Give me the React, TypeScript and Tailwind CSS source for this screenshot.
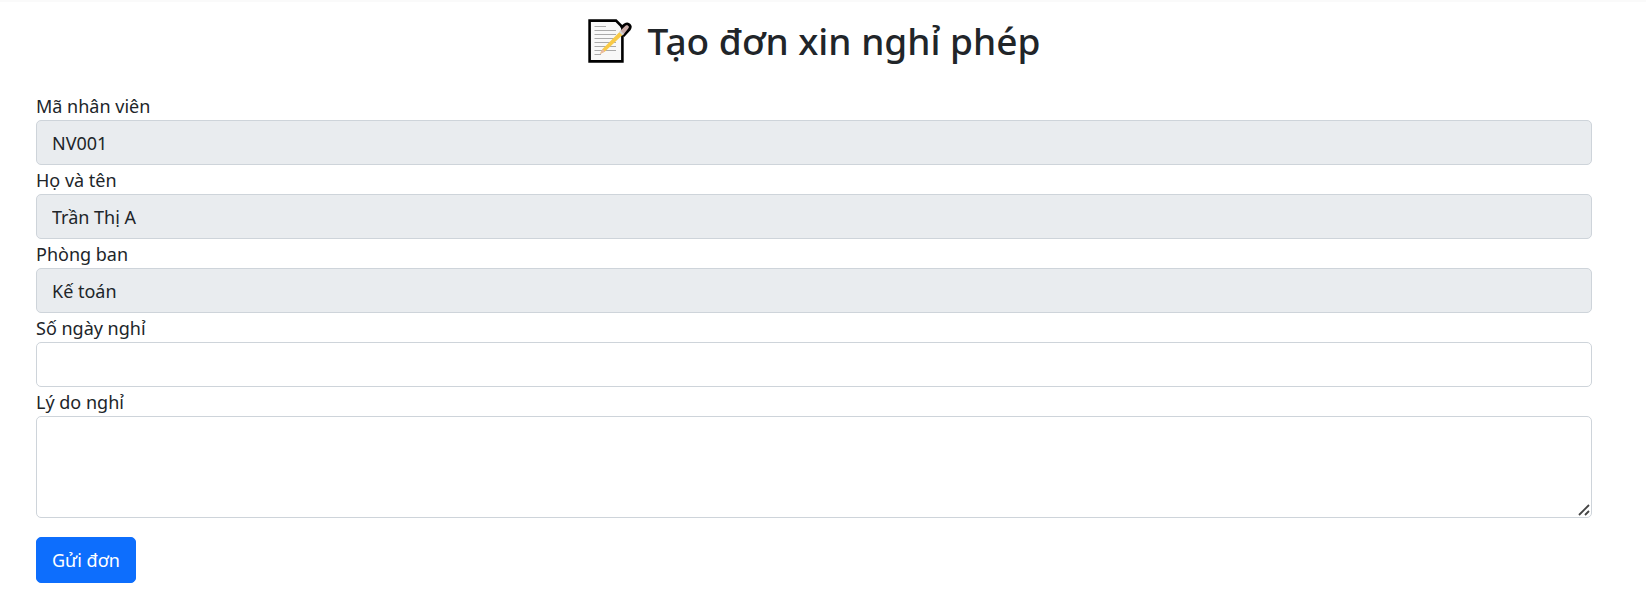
import type { ReactNode } from "react";

const control =
  "block w-full rounded-[5px] border border-[#ced4da] px-[15px] text-lg text-[#212529] outline-none focus:border-[#86b7fe]";

function MemoIcon() {
  return (
    <svg viewBox="0 0 44 44" className="size-11 shrink-0" aria-hidden="true">
      <path d="M1.6 1.6H28L34.4 8V42.4H1.6Z" fill="#f8f8f8" stroke="#000" strokeWidth="2.6" />
      <path
        d="M6.5 7.5H18M6.5 11.5H28M6.5 15.5H28M6.5 19.5H28M6.5 23.5H28M6.5 27.5H28M6.5 31.5H28M6.5 35.5H13"
        stroke="#aaa"
        strokeWidth="1.1"
      />
      <path d="M33 9L37 5.8C40.5 3.6 43.5 7 41.2 10.2L35 17" fill="none" stroke="#000" strokeWidth="3.2" />
      <path d="M12 35L14.5 30L32 12.5L35 15.5L17 32.5Z" fill="#f8ca48" />
      <path d="M12 35L14.5 30L17 32.5Z" fill="#e8b9a8" />
      <path d="M32 12L37.5 6.8C39.6 5.4 41.5 7.6 40.2 9.6L35.5 15.5Z" fill="#c9aaa6" />
      <path d="M31 13L32.5 11.5L36 15L34.5 16.5Z" fill="#d4d4d4" />
    </svg>
  );
}

function Field({ id, label, children }: { id: string; label: string; children: ReactNode }) {
  return (
    <div>
      <label htmlFor={id} className="block h-[29px] text-lg leading-[31px]">
        {label}
      </label>
      {children}
    </div>
  );
}

const employee = [
  { id: "code", label: "Mã nhân viên", value: "NV001" },
  { id: "name", label: "Họ và tên", value: "Trần Thị A" },
  { id: "department", label: "Phòng ban", value: "Kế toán" },
];

export default function App() {
  return (
    <main className="min-h-screen border-t-2 border-[#fafafa] bg-white pt-[11px] pr-[54px] pb-7 pl-9 font-['Noto_Sans',sans-serif] text-[#212529]">
      <h1 className="mb-[22px] flex h-14 items-center justify-center gap-4 text-[37px] leading-[56px] font-medium">
        <MemoIcon />
        Tạo đơn xin nghỉ phép
      </h1>
      <form onSubmit={(e) => e.preventDefault()}>
        {employee.map((f) => (
          <Field key={f.id} id={f.id} label={f.label}>
            <input id={f.id} type="text" readOnly value={f.value} className={`${control} h-[45px] bg-[#e9ecef]`} />
          </Field>
        ))}
        <Field id="days" label="Số ngày nghỉ">
          <input id="days" type="text" inputMode="numeric" className={`${control} h-[45px] bg-white`} />
        </Field>
        <Field id="reason" label="Lý do nghỉ">
          <div className="relative">
            <textarea
              id="reason"
              className={`${control} h-[102px] resize-y bg-white py-2 [&::-webkit-resizer]:bg-transparent`}
            />
            <svg
              viewBox="0 0 12 12"
              className="pointer-events-none absolute right-[2px] bottom-[2px] size-3"
              aria-hidden="true"
            >
              <path d="M1 11L11 1M7 11L11 7" stroke="#444" strokeWidth="1.8" />
            </svg>
          </div>
        </Field>
        <button
          type="submit"
          className="mt-[19px] h-[46px] rounded-[5px] border border-[#0d6efd] bg-[#0d6efd] px-[15px] text-lg text-white"
        >
          Gửi đơn
        </button>
      </form>
    </main>
  );
}
